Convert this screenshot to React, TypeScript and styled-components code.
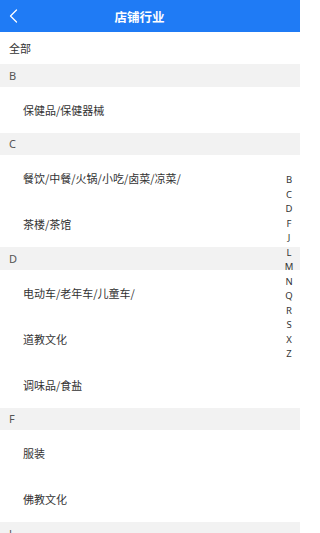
import React from 'react';
import styled, { createGlobalStyle } from 'styled-components';

const GlobalStyle = createGlobalStyle`
  html, body {
    margin: 0;
    padding: 0;
    background: #fff;
    font-family: "Liberation Sans", "Noto Sans CJK SC", sans-serif;
  }
  body { overflow: hidden; }
`;

type Section = { letter: string; items: string[] };

const sections: Section[] = [
  { letter: 'B', items: ['保健品/保健器械'] },
  { letter: 'C', items: ['餐饮/中餐/火锅/小吃/卤菜/凉菜/', '茶楼/茶馆'] },
  { letter: 'D', items: ['电动车/老年车/儿童车/', '道教文化', '调味品/食盐'] },
  { letter: 'F', items: ['服装', '佛教文化'] },
  { letter: 'J', items: ['家具/家居'] },
];

const indexLetters = ['B', 'C', 'D', 'F', 'J', 'L', 'M', 'N', 'Q', 'R', 'S', 'X', 'Z'];

function App() {
  return (
    <Page>
      <GlobalStyle />
      <NavBar>
        <BackBtn>
          <svg width="9" height="14" viewBox="0 0 9 14" fill="none">
            <path d="M7.5 1 L1.5 7 L7.5 13" stroke="#fff" strokeWidth="1.3" strokeLinecap="round" strokeLinejoin="round" />
          </svg>
        </BackBtn>
        <Title>店铺行业</Title>
      </NavBar>
      <List>
        <AllRow>全部</AllRow>
        {sections.map((s) => (
          <React.Fragment key={s.letter}>
            <LetterHeader>{s.letter}</LetterHeader>
            {s.items.map((it) => (
              <ItemRow key={it}>{it}</ItemRow>
            ))}
          </React.Fragment>
        ))}
      </List>
      <IndexBar>
        {indexLetters.map((l) => (
          <IndexLetter key={l}>{l}</IndexLetter>
        ))}
      </IndexBar>
    </Page>
  );
}

export default App;

const Page = styled.div`
  position: relative;
  width: 300px;
  height: 533px;
  overflow: hidden;
  background: #fff;
`;

const NavBar = styled.div`
  display: flex;
  align-items: center;
  height: 32px;
  background: #1f7bf5;
  color: #fff;
`;

const BackBtn = styled.div`
  display: flex;
  align-items: center;
  width: 21px;
  padding-left: 9px;
  box-sizing: border-box;
  height: 100%;
`;

const Title = styled.div`
  flex: 1;
  text-align: center;
  padding-right: 42px;
  font-size: 12.5px;
  font-weight: bold;
  font-family: "Noto Sans CJK SC", sans-serif;
`;

const List = styled.div`
  display: flex;
  flex-direction: column;
`;

const AllRow = styled.div`
  display: flex;
  align-items: center;
  height: 32px;
  padding-left: 9px;
  font-size: 11px;
  color: #333;
  font-family: "Noto Sans CJK SC", sans-serif;
`;

const LetterHeader = styled.div`
  display: flex;
  align-items: center;
  height: 22.5px;
  padding-left: 9px;
  background: #f2f2f2;
  font-size: 11px;
  color: #555;
  font-family: "Noto Sans", "Noto Sans CJK SC", sans-serif;
`;

const ItemRow = styled.div`
  display: flex;
  align-items: center;
  height: 46px;
  padding-left: 23px;
  font-size: 11px;
  color: #333;
  font-family: "Noto Sans CJK SC", sans-serif;
`;

const IndexBar = styled.div`
  position: absolute;
  right: 0;
  top: 173px;
  width: 22px;
  display: flex;
  flex-direction: column;
  align-items: center;
`;

const IndexLetter = styled.div`
  height: 14.5px;
  line-height: 14.5px;
  font-size: 9.5px;
  color: #333;
  font-family: "Noto Sans", sans-serif;
`;
